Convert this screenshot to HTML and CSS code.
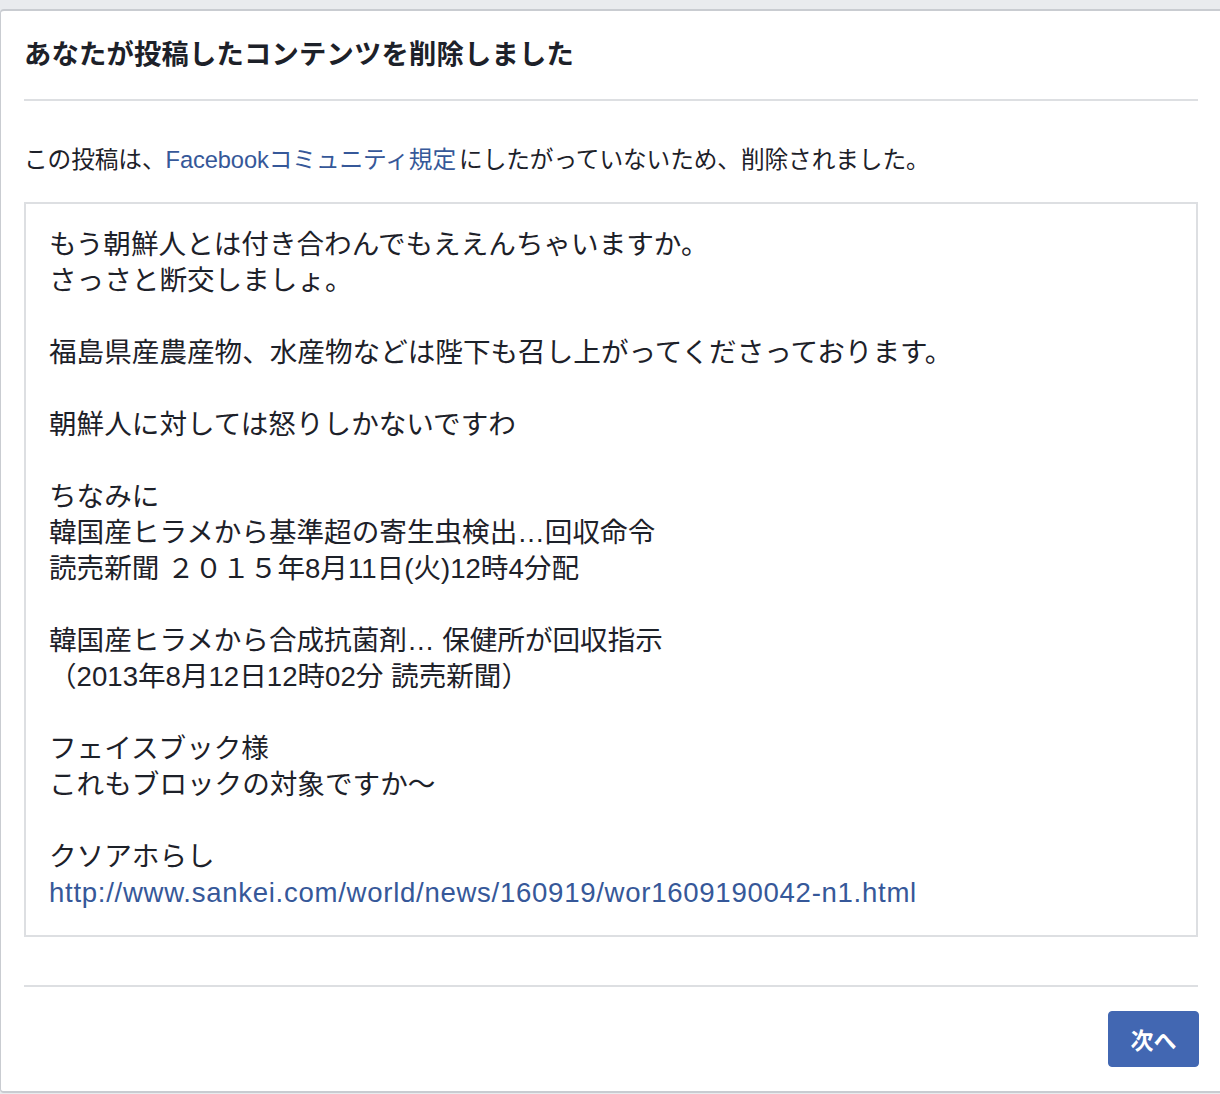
FILE: index.html
```html
<!DOCTYPE html>
<html lang="ja">
<head>
<meta charset="utf-8">
<title>削除されたコンテンツ</title>
<link rel="stylesheet" href="styles.css">
</head>
<body>
<div class="dialog">
  <div class="header">
    <h1 class="title">あなたが投稿したコンテンツを削除しました</h1>
  </div>
  <p class="notice">この投稿は、<a class="link" href="#">Facebookコミュニティ規定</a>にしたがっていないため、削除されました。</p>
  <div class="post">
<div class="post-text">もう朝鮮人とは付き合わんでもええんちゃいますか。
さっさと断交しましょ。

福島県産農産物、水産物などは陛下も召し上がってくださっております。

朝鮮人に対しては怒りしかないですわ

ちなみに
韓国産ヒラメから基準超の寄生虫検出…回収命令
読売新聞 ２０１５年8月11日(火)12時4分配

韓国産ヒラメから合成抗菌剤… 保健所が回収指示
（2013年8月12日12時02分 読売新聞）

フェイスブック様
これもブロックの対象ですか〜

クソアホらし
<a class="url" href="#">http://www.sankei.com/world/news/160919/wor1609190042-n1.html</a></div>
  </div>
  <div class="footer">
    <button class="next">次へ</button>
  </div>
</div>
</body>
</html>
```

FILE: styles.css
```css
* { box-sizing: border-box; }

html, body {
  margin: 0;
  padding: 0;
}

body {
  background: #e9ebee;
  font-family: "Liberation Sans", "Noto Sans CJK JP", sans-serif;
  color: #1d2129;
  height: 1094px;
  overflow: hidden;
}

.dialog {
  margin-top: 9px;
  width: 1226px;
  height: 1084px;
  background: #fff;
  border: 1px solid #c9ccd1;
  border-top-width: 2px;
  border-bottom-width: 2px;
  border-radius: 4px;
  padding: 0 27px 0 23px;
}

.header {
  height: 90px;
  display: flex;
  align-items: center;
  border-bottom: 2px solid #dddfe2;
}

.title {
  margin: 0;
  padding-bottom: 1px;
  font-size: 27.3px;
  font-weight: bold;
  line-height: 36px;
  letter-spacing: 0.2px;
}

.notice {
  margin: 43px 0 26px 0;
  font-size: 23.7px;
  line-height: 32px;
  letter-spacing: -0.1px;
}

.link, .url {
  color: #365899;
  text-decoration: none;
}

.link {
  margin-right: 3px;
}

.url {
  letter-spacing: 0.7px;
}

.post {
  border: 2px solid #dddfe2;
  padding: 23px 25px 24px 23px;
}

.post-text {
  white-space: pre-line;
  font-size: 27.6px;
  line-height: 36px;
}

.footer {
  margin-top: 48px;
  border-top: 2px solid #dddfe2;
  padding-top: 24px;
  display: flex;
  justify-content: flex-end;
}

.next {
  width: 91px;
  height: 56px;
  margin-right: -1px;
  background: #4267b2;
  border: 1px solid #4267b2;
  border-radius: 4px;
  color: #fff;
  font-family: "Noto Sans CJK JP", sans-serif;
  font-size: 23px;
  font-weight: bold;
  padding: 0;
}
```
